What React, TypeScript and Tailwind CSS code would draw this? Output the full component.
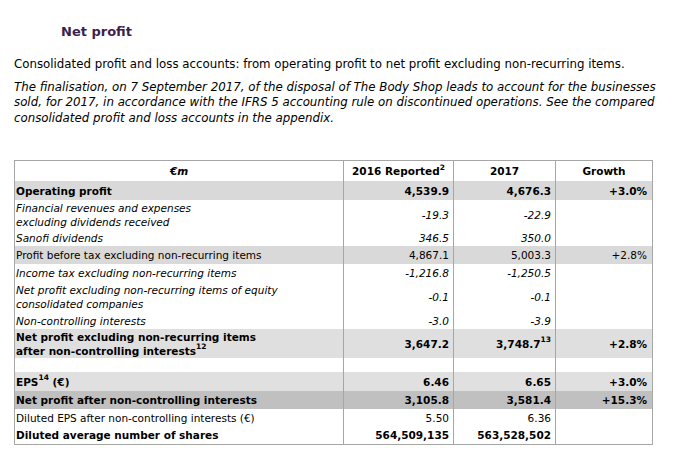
import React from "react";

type Row = {
  label: React.ReactNode;
  a: React.ReactNode;
  b: React.ReactNode;
  g?: React.ReactNode;
  bg?: string;
  h: string;
  style: "bold" | "italic" | "normal";
};

const sup = (t: string) => <sup className="text-[7.5px] relative -top-[1px] align-super leading-none">{t}</sup>;

const rows: Row[] = [
  { label: "Operating profit", a: "4,539.9", b: "4,676.3", g: "+3.0%", bg: "bg-[#d9d9d9]", h: "h-[19px]", style: "bold" },
  { label: <>Financial revenues and expenses<br />excluding dividends received</>, a: "-19.3", b: "-22.9", h: "h-[30px]", style: "italic" },
  { label: "Sanofi dividends", a: "346.5", b: "350.0", h: "h-[16px]", style: "italic" },
  { label: "Profit before tax excluding non-recurring items", a: "4,867.1", b: "5,003.3", g: "+2.8%", bg: "bg-[#d9d9d9]", h: "h-[18px]", style: "normal" },
  { label: "Income tax excluding non-recurring items", a: "-1,216.8", b: "-1,250.5", h: "h-[17px]", style: "italic" },
  { label: <>Net profit excluding non-recurring items of equity<br />consolidated companies</>, a: "-0.1", b: "-0.1", h: "h-[32px]", style: "italic" },
  { label: "Non-controlling interests", a: "-3.0", b: "-3.9", h: "h-[16px]", style: "italic" },
  { label: <>Net profit excluding non-recurring items<br />after non-controlling interests{sup("12")}</>, a: "3,647.2", b: <>3,748.7{sup("13")}</>, g: "+2.8%", bg: "bg-[#dfdfdf]", h: "h-[29px]", style: "bold" },
  { label: "", a: "", b: "", h: "h-[14px]", style: "normal" },
  { label: <>EPS{sup("14")} (€)</>, a: "6.46", b: "6.65", g: "+3.0%", bg: "bg-[#e0e0e0]", h: "h-[19px]", style: "bold" },
  { label: "Net profit after non-controlling interests", a: "3,105.8", b: "3,581.4", g: "+15.3%", bg: "bg-[#c0c0c0]", h: "h-[18px]", style: "bold" },
  { label: "Diluted EPS after non-controlling interests (€)", a: "5.50", b: "6.36", h: "h-[17px]", style: "normal" },
  { label: "Diluted average number of shares", a: "564,509,135", b: "563,528,502", h: "h-[18px]", style: "bold" },
];

export default function App() {
  const font = { fontFamily: '"DejaVu Sans", sans-serif' };
  return (
    <div className="w-[674px] h-[460px] bg-white text-black overflow-hidden pt-[24px]" style={font}>
      <div className="pl-[61px] text-[13px] font-bold text-[#3b1f4f] leading-[16px]">Net profit</div>
      <p className="pl-[14px] mt-[17px] text-[11.8px] leading-[15px] whitespace-nowrap">
        Consolidated profit and loss accounts: from operating profit to net profit excluding non-recurring items.
      </p>
      <p className="pl-[14px] mt-[8px] text-[11.8px] leading-[15.3px] italic whitespace-nowrap">
        The finalisation, on 7 September 2017, of the disposal of The Body Shop leads to account for the businesses
        <br />
        sold, for 2017, in accordance with the IFRS 5 accounting rule on discontinued operations. See the compared
        <br />
        consolidated profit and loss accounts in the appendix.
      </p>
      <table className="ml-[14px] mt-[34px] w-[638px] border-collapse text-[10.5px] leading-[14px] border border-[#a6a6a6] table-fixed">
        <colgroup>
          <col className="w-[329px]" />
          <col className="w-[110px]" />
          <col className="w-[102px]" />
          <col className="w-[97px]" />
        </colgroup>
        <thead>
          <tr className="h-[21px] font-bold">
            <th className="italic text-center font-bold">€m</th>
            <th className="border-l border-[#a6a6a6] text-center font-bold">2016 Reported{sup("2")}</th>
            <th className="border-l border-[#a6a6a6] text-center font-bold">2017</th>
            <th className="border-l border-[#a6a6a6] text-center font-bold">Growth</th>
          </tr>
        </thead>
        <tbody>
          {rows.map((r, i) => {
            const st = r.style === "bold" ? "font-bold" : r.style === "italic" ? "italic" : "";
            return (
              <tr key={i} className={`${r.h} ${r.bg ?? ""} ${st}`}>
                <td className="pl-[1px] align-middle p-0">{r.label}</td>
                <td className="border-l border-[#a6a6a6] text-right pr-[4px] align-middle">{r.a}</td>
                <td className="border-l border-[#a6a6a6] text-right pr-[4px] align-middle">{r.b}</td>
                <td className="border-l border-[#a6a6a6] text-right pr-[5px] align-middle">{r.g}</td>
              </tr>
            );
          })}
        </tbody>
      </table>
    </div>
  );
}
